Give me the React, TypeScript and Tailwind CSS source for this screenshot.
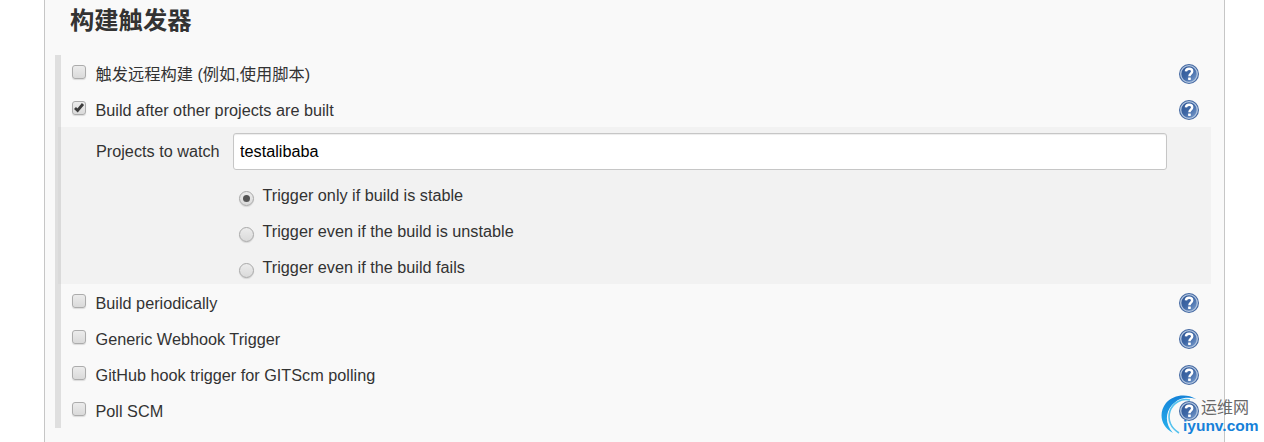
import { useState } from "react";

interface TriggerRowProps {
  label: string;
  checked?: boolean;
}

interface ProjectRadioProps {
  label: string;
  selected: boolean;
  onSelect: () => void;
}

function HelpIcon() {
  return (
    <svg width="20" height="20" viewBox="0 0 20 20" aria-hidden="true">
      <defs>
        <linearGradient id="help-fill" x1="0" y1="0" x2="1" y2="1">
          <stop offset="0" stopColor="#2d5493" />
          <stop offset="0.5" stopColor="#3f68a6" />
          <stop offset="1" stopColor="#83a5d3" />
        </linearGradient>
      </defs>
      <circle cx="10" cy="10" r="10" fill="#4368a2" />
      <circle cx="10" cy="10" r="8.3" fill="url(#help-fill)" stroke="#b4c7e0" strokeWidth="1.3" />
      <path
        d="M6.9 7.4C7 5.5 8.2 4.7 10.1 4.7c1.9 0 3.1.9 3.1 2.5 0 2.3-2.8 2.4-2.8 5"
        fill="none"
        stroke="#fff"
        strokeWidth="2.4"
      />
      <rect x="9.1" y="13.4" width="2.7" height="2.6" rx="0.4" fill="#fff" />
    </svg>
  );
}

// label and help button, the checkbox toggles the trigger
function TriggerRow({ label, checked = false }: TriggerRowProps) {
  const [is_checked, setIsChecked] = useState(checked);
  return (
    <div className="flex h-9 items-start pr-3 pl-[11px]">
      <button
        type="button"
        role="checkbox"
        aria-checked={is_checked}
        aria-label={label}
        onClick={() => setIsChecked(!is_checked)}
        className="mt-2.5 h-3.5 w-3.5 shrink-0 rounded-[3px] border border-[#acacac] bg-linear-to-b from-[#ececec] to-[#dadada] shadow-[0_1px_1px_rgba(0,0,0,0.12)]"
      >
        {is_checked && (
          <svg width="12" height="12" viewBox="0 0 12 12" aria-hidden="true">
            <path d="M2 6 4.6 8.5 10 2" fill="none" stroke="#3c3c3c" strokeWidth="2.8" />
          </svg>
        )}
      </button>
      <span className="ml-[9.5px] pt-[7px] leading-6">{label}</span>
      <button type="button" aria-label="Help" className="mt-[9px] ml-auto h-5 w-5">
        <HelpIcon />
      </button>
    </div>
  );
}

function ProjectRadio({ label, selected, onSelect }: ProjectRadioProps) {
  return (
    <div className="flex h-9 items-start">
      <button
        type="button"
        role="radio"
        aria-checked={selected}
        aria-label={label}
        onClick={onSelect}
        className="mt-[15px] flex h-[15px] w-[15px] items-center justify-center rounded-full border border-[#a8a8a8] bg-linear-to-b from-[#ececec] to-[#dadada] shadow-[0_1px_1px_rgba(0,0,0,0.12)]"
      >
        {selected && <span className="h-[7px] w-[7px] rounded-full bg-[#555]" />}
      </button>
      <span className="ml-[8.5px] pt-[7px] leading-6">{label}</span>
    </div>
  );
}

const CONDITIONS = [
  "Trigger only if build is stable",
  "Trigger even if the build is unstable",
  "Trigger even if the build fails",
];

function UpstreamProjects() {
  const [projects, setProjects] = useState("testalibaba");
  const [condition, setCondition] = useState(0);
  return (
    <div className="-ml-[3px] h-[157px] border-l-[3px] border-[#dadada] bg-[#f2f2f2] pt-1.5 pl-[35px]">
      <div className="flex h-[43px] items-start">
        <label htmlFor="projects" className="w-[137px] pt-1.5 leading-6">
          Projects to watch
        </label>
        <input
          id="projects"
          value={projects}
          onChange={(event) => setProjects(event.target.value)}
          className="h-[37px] w-[934px] rounded-[3px] border border-[#c6c6c6] bg-white px-1.5 text-black shadow-[inset_0_1px_1px_rgba(0,0,0,0.075)] outline-none"
        />
      </div>
      <div role="radiogroup" className="pl-[143px]">
        {CONDITIONS.map((label, index) => (
          <ProjectRadio
            key={label}
            label={label}
            selected={condition === index}
            onSelect={() => setCondition(index)}
          />
        ))}
      </div>
    </div>
  );
}

function Watermark() {
  return (
    <div className="pointer-events-none absolute top-[393px] left-[1159px] h-[44px] w-[105px]">
      <svg className="absolute" width="44" height="44" viewBox="0 0 44 44" aria-hidden="true">
        <defs>
          <linearGradient id="swirl" x1="0" y1="0" x2="0" y2="1">
            <stop offset="0" stopColor="#1583d8" />
            <stop offset="1" stopColor="#27b2ee" />
          </linearGradient>
        </defs>
        <path d="M37 6C27 0 14 2 7 10-1 20 2 34 14 40 6 31 6 20 13 12 19 5 28 3 37 6Z" fill="url(#swirl)" />
        <path d="M31 7C22 5 14 10 11 18 8 27 12 35 20 40" fill="none" stroke="#54c2ee" strokeWidth="1.6" />
      </svg>
      <span className="absolute top-[5px] left-[42px] text-[16px] leading-5 whitespace-nowrap text-[#686868]">
        运维网
      </span>
      <span className="absolute top-[23px] left-[24px] text-[15.5px] leading-5 font-bold whitespace-nowrap text-[#1681d9]">
        iyunv.com
      </span>
    </div>
  );
}

export default function App() {
  return (
    <div className="relative h-[442px] w-[1264px] overflow-hidden bg-white font-['Liberation_Sans','Noto_Sans_CJK_SC',sans-serif] text-[16.24px] text-[#333]">
      <main className="ml-11 h-full w-[1181px] border-x border-[#c6c6c6] bg-[#f9f9f9] pl-2.5">
        <h1 className="h-[55px] pt-[5px] pl-[15px] text-[24.3px] leading-8 font-bold">构建触发器</h1>
        <section className="w-[1156px] border-l-[6px] border-[#dfdfdf]">
          <TriggerRow label="触发远程构建 (例如,使用脚本)" />
          <TriggerRow label="Build after other projects are built" checked />
          <UpstreamProjects />
          <TriggerRow label="Build periodically" />
          <TriggerRow label="Generic Webhook Trigger" />
          <TriggerRow label="GitHub hook trigger for GITScm polling" />
          <TriggerRow label="Poll SCM" />
        </section>
      </main>
      <Watermark />
    </div>
  );
}
